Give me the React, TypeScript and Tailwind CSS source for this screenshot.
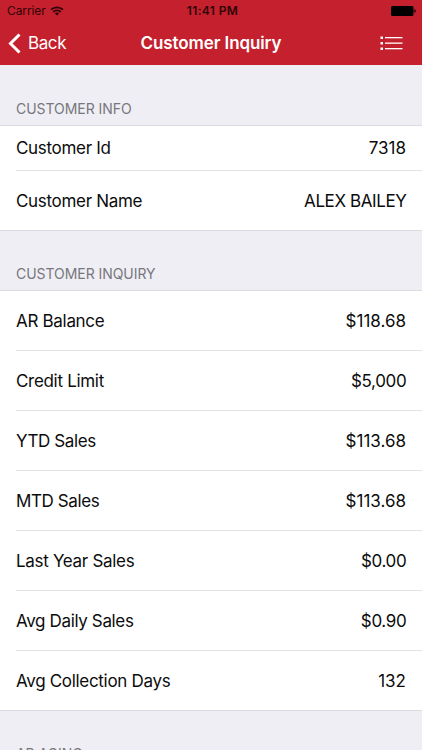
interface Row {
  label: string;
  value: string;
  labelClass?: string;
  valueClass?: string;
}

const infoRows: Row[] = [
  { label: "Customer Id", value: "7318" },
  { label: "Customer Name", value: "ALEX BAILEY", valueClass: "tracking-[-0.4px] -mr-[0.4px]" },
];

const inquiryRows: Row[] = [
  { label: "AR Balance", value: "$118.68" },
  { label: "Credit Limit", value: "$5,000", valueClass: "tracking-[-0.35px] -mr-[0.35px]" },
  { label: "YTD Sales", value: "$113.68", labelClass: "tracking-[-0.4px]" },
  { label: "MTD Sales", value: "$113.68", labelClass: "tracking-[-0.4px]" },
  { label: "Last Year Sales", value: "$0.00", valueClass: "tracking-[-0.35px] -mr-[0.35px]" },
  { label: "Avg Daily Sales", value: "$0.90", labelClass: "tracking-[-0.36px]", valueClass: "tracking-[-0.35px] -mr-[0.35px]" },
  { label: "Avg Collection Days", value: "132" },
];

function StatusBar() {
  return (
    <div className="grid h-[21px] grid-cols-3 items-center pl-[7px] pr-1.5 text-[12px] leading-none text-[#300508]">
      <div className="flex items-center gap-1">
        <span className="tracking-[-0.1px]">Carrier</span>
        <svg width="14" height="10" viewBox="0 0 14 10" fill="none" stroke="currentColor" strokeWidth="1.8">
          <path d="M1 3.600C4.400.5 9.600.5 13 3.600" />
          <path d="M3.200 6C5.400 4 8.600 4 10.800 6" />
          <path d="M7 9.400L4.900 7.400Q7 5.800 9.100 7.400Z" fill="currentColor" stroke="none" />
        </svg>
      </div>
      <span className="pl-0.5 text-center font-semibold tracking-[0.35px]">11:41 PM</span>
      <svg className="justify-self-end" width="25" height="10" viewBox="0 0 25 10" fill="black">
        <rect x="0" y="0" width="22.500" height="10" rx="1.500" />
        <path d="M23.300 3.200Q24.700 3.500 24.700 5T23.300 6.800Z" />
      </svg>
    </div>
  );
}

function NavBar() {
  return (
    <div className="grid h-11 grid-cols-[1fr_auto_1fr] items-center pl-2 pr-[19px] text-[17px] leading-none text-white">
      <button className="flex items-center gap-[7px]">
        <svg width="13" height="21" viewBox="0 0 13 21" fill="none" stroke="currentColor" strokeWidth="3">
          <path d="M11.500 1.500L2.500 10.500L11.500 19.500" />
        </svg>
        <span className="pt-px tracking-[-0.4px]">Back</span>
      </button>
      <h1 className="-mr-[11px] pt-px font-semibold tracking-[-0.1px]">Customer Inquiry</h1>
      <svg className="justify-self-end" width="23" height="15" viewBox="0 0 23 15" fill="currentColor">
        <rect x="0.500" y="0.500" width="2.500" height="2.500" />
        <rect x="0.500" y="6" width="2.500" height="2.500" />
        <rect x="0.500" y="11.500" width="2.500" height="2.500" />
        <rect x="5" y="1" width="17.500" height="1.300" />
        <rect x="5" y="6.500" width="17.500" height="1.300" />
        <rect x="5" y="12" width="17.500" height="1.300" />
      </svg>
    </div>
  );
}

function Section({ title, rows, first }: { title: string; rows: Row[]; first?: boolean }) {
  return (
    <section>
      <h2
        className={`flex items-end pb-2 pl-4 text-[14px] leading-4 tracking-[-0.05px] text-[#77777c] ${
          first ? "h-[60px]" : "h-[59px]"
        }`}
      >
        {title}
      </h2>
      <ul className="border-y border-[#dcdbe0] bg-white pl-4">
        {rows.map((row, i) => (
          <li
            key={row.label}
            className={`flex items-center justify-between border-[#e2e2e4] pr-4 pt-px text-[17px] leading-none text-[#0c0c0c] ${
              i === 0 && first ? "h-[45px]" : i === rows.length - 1 ? "h-[59px]" : "h-[60px]"
            } ${i === rows.length - 1 ? "" : "border-b"}`}
          >
            <span className={row.labelClass ?? "tracking-[-0.31px]"}>{row.label}</span>
            <span className={row.valueClass}>{row.value}</span>
          </li>
        ))}
      </ul>
    </section>
  );
}

export default function App() {
  return (
    <div className="h-[750px] w-full overflow-hidden bg-[#efeef4] font-[Inter,sans-serif]">
      <header className="h-[65px] bg-[#c4202d]">
        <StatusBar />
        <NavBar />
      </header>
      <main>
        <Section title="CUSTOMER INFO" rows={infoRows} first />
        <Section title="CUSTOMER INQUIRY" rows={inquiryRows} />
        <Section title="AR AGING" rows={[]} />
      </main>
    </div>
  );
}
